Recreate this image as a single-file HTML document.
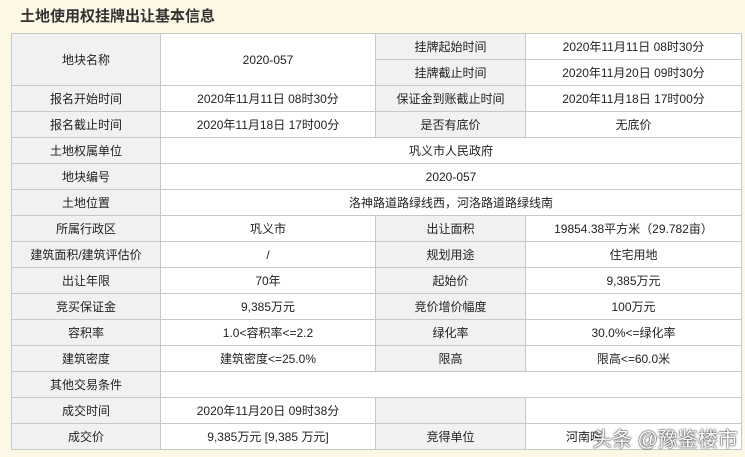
<!DOCTYPE html>
<html><head><meta charset="utf-8"><style>
html,body{margin:0;padding:0;}
body{width:745px;height:457px;background:#fdf7e6;font-family:"Liberation Sans","Noto Sans CJK SC","WenQuanYi Zen Hei",sans-serif;position:relative;overflow:hidden;}
h1{position:absolute;left:20px;top:5px;margin:0;font-size:15px;font-weight:bold;color:#333;font-family:"Noto Sans CJK SC","WenQuanYi Zen Hei",sans-serif;}
table{position:absolute;left:11px;top:33px;border-collapse:collapse;table-layout:fixed;width:730px;}
td{border:1px solid #c8c8c8;height:25px;padding:0;text-align:center;font-size:12px;color:#222;background:#fff;}
td.l{background:#f1f1f1;}
.wm{position:absolute;left:592px;top:423px;font-size:20px;color:#fff;text-shadow:0 0 2px #333,0 0 1px #000;}
</style></head><body>
<h1>土地使用权挂牌出让基本信息</h1>
<table>
<colgroup><col style="width:149px"><col style="width:215px"><col style="width:150px"><col style="width:216px"></colgroup>
<tr><td class="l" rowspan="2">地块名称</td><td rowspan="2">2020-057</td><td class="l">挂牌起始时间</td><td>2020年11月11日 08时30分</td></tr>
<tr><td class="l">挂牌截止时间</td><td>2020年11月20日 09时30分</td></tr>
<tr><td class="l">报名开始时间</td><td>2020年11月11日 08时30分</td><td class="l">保证金到账截止时间</td><td>2020年11月18日 17时00分</td></tr>
<tr><td class="l">报名截止时间</td><td>2020年11月18日 17时00分</td><td class="l">是否有底价</td><td>无底价</td></tr>
<tr><td class="l">土地权属单位</td><td colspan="3">巩义市人民政府</td></tr>
<tr><td class="l">地块编号</td><td colspan="3">2020-057</td></tr>
<tr><td class="l">土地位置</td><td colspan="3">洛神路道路绿线西，河洛路道路绿线南</td></tr>
<tr><td class="l">所属行政区</td><td>巩义市</td><td class="l">出让面积</td><td>19854.38平方米（29.782亩）</td></tr>
<tr><td class="l">建筑面积/建筑评估价</td><td>/</td><td class="l">规划用途</td><td>住宅用地</td></tr>
<tr><td class="l">出让年限</td><td>70年</td><td class="l">起始价</td><td>9,385万元</td></tr>
<tr><td class="l">竞买保证金</td><td>9,385万元</td><td class="l">竞价增价幅度</td><td>100万元</td></tr>
<tr><td class="l">容积率</td><td>1.0&lt;容积率&lt;=2.2</td><td class="l">绿化率</td><td>30.0%&lt;=绿化率</td></tr>
<tr><td class="l">建筑密度</td><td>建筑密度&lt;=25.0%</td><td class="l">限高</td><td>限高&lt;=60.0米</td></tr>
<tr><td class="l">其他交易条件</td><td colspan="3"></td></tr>
<tr><td class="l">成交时间</td><td>2020年11月20日 09时38分</td><td class="l"></td><td></td></tr>
<tr><td class="l">成交价</td><td>9,385万元 [9,385 万元]</td><td class="l">竞得单位</td><td style="text-align:left;padding-left:40px">河南晖</td></tr>
</table>
<div class="wm">头条 @豫鉴楼市</div>
</body></html>
